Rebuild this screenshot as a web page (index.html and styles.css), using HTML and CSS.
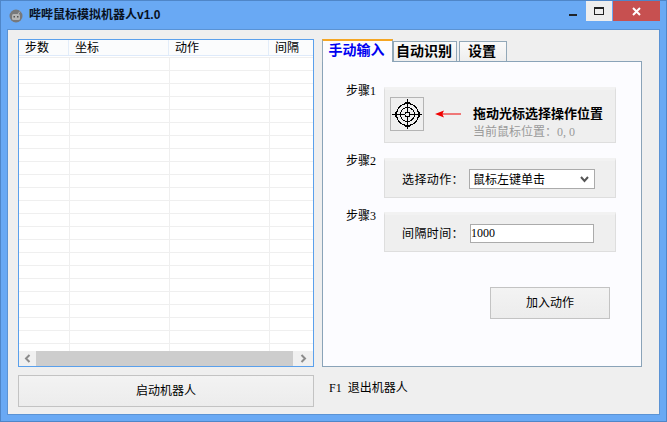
FILE: index.html
```html
<!DOCTYPE html>
<html lang="zh">
<head>
<meta charset="utf-8">
<title>哔哔鼠标模拟机器人v1.0</title>
<link rel="stylesheet" href="styles.css">
</head>
<body>
<div class="window">
  <header class="titlebar">
    <svg class="app-icon" width="14" height="14" viewBox="0 0 14 14">
      <circle cx="7" cy="7" r="6.5" fill="#77787a"/>
      <rect x="3" y="5" width="8" height="6" rx="1.5" fill="#b5b5b5"/>
      <rect x="4.5" y="7" width="1.5" height="1.5" fill="#555"/>
      <rect x="8" y="7" width="1.5" height="1.5" fill="#555"/>
      <path d="M9 5 L11 2.5" stroke="#b5b5b5" stroke-width="1"/>
    </svg>
    <div class="title">哔哔鼠标模拟机器人v1.0</div>
    <div class="controls">
      <div class="ctl ctl-min"><span class="min-bar"></span></div>
      <div class="ctl ctl-max"><span class="max-box"></span></div>
      <div class="ctl ctl-close">
        <svg width="9" height="9" viewBox="0 0 9 9"><path d="M1 1 L8 8 M8 1 L1 8" stroke="#fff" stroke-width="2"/></svg>
      </div>
    </div>
  </header>
  <main class="client">
    <section class="left">
      <div class="list">
        <div class="list-head">
          <div class="hcell hc1">步数</div>
          <div class="hcell hc2">坐标</div>
          <div class="hcell hc3">动作</div>
          <div class="hcell hc4">间隔</div>
        </div>
        <div class="rows">
          <div class="row"><i></i><i></i><i></i><i></i></div>
          <div class="row"><i></i><i></i><i></i><i></i></div>
          <div class="row"><i></i><i></i><i></i><i></i></div>
          <div class="row"><i></i><i></i><i></i><i></i></div>
          <div class="row"><i></i><i></i><i></i><i></i></div>
          <div class="row"><i></i><i></i><i></i><i></i></div>
          <div class="row"><i></i><i></i><i></i><i></i></div>
          <div class="row"><i></i><i></i><i></i><i></i></div>
          <div class="row"><i></i><i></i><i></i><i></i></div>
          <div class="row"><i></i><i></i><i></i><i></i></div>
          <div class="row"><i></i><i></i><i></i><i></i></div>
          <div class="row"><i></i><i></i><i></i><i></i></div>
          <div class="row"><i></i><i></i><i></i><i></i></div>
          <div class="row"><i></i><i></i><i></i><i></i></div>
          <div class="row"><i></i><i></i><i></i><i></i></div>
          <div class="row"><i></i><i></i><i></i><i></i></div>
          <div class="row"><i></i><i></i><i></i><i></i></div>
          <div class="row"><i></i><i></i><i></i><i></i></div>
          <div class="row"><i></i><i></i><i></i><i></i></div>
          <div class="row"><i></i><i></i><i></i><i></i></div>
          <div class="row"><i></i><i></i><i></i><i></i></div>
          <div class="row"><i></i><i></i><i></i><i></i></div>
          <div class="row row-last"><i></i><i></i><i></i><i></i></div>
        </div>
        <div class="hscroll">
          <div class="sb-arrow sb-left">
            <svg width="7" height="9" viewBox="0 0 7 9"><path d="M5.5 1 L2 4.5 L5.5 8" fill="none" stroke="#8c8c8c" stroke-width="2"/></svg>
          </div>
          <div class="sb-thumb"></div>
          <div class="sb-arrow sb-right">
            <svg width="7" height="9" viewBox="0 0 7 9"><path d="M1.5 1 L5 4.5 L1.5 8" fill="none" stroke="#8c8c8c" stroke-width="2"/></svg>
          </div>
        </div>
      </div>
      <button class="btn btn-start">启动机器人</button>
    </section>
    <section class="right">
      <div class="tabs">
        <div class="tab tab-active">手动输入</div>
        <div class="tab tab-auto">自动识别</div>
        <div class="tab tab-set">设置</div>
      </div>
      <div class="panel">
        <div class="step step-1">
          <div class="step-label">步骤1</div>
          <div class="group group-1">
            <div class="target">
              <svg width="30" height="30" viewBox="0 0 30 30" shape-rendering="crispEdges">
                <g fill="none" stroke="#000" stroke-width="1">
                  <circle cx="15.5" cy="15.5" r="11"/>
                  <circle cx="15.5" cy="15.5" r="7"/>
                  <circle cx="15.5" cy="15.5" r="2.5"/>
                </g>
                <path d="M15.5 0 V13 M15.5 18 V30 M0 15.5 H13 M18 15.5 H30" stroke="#000" stroke-width="1"/>
                <path d="M13 3.5 H18 M13 27.5 H18 M3.5 13 V18 M27.5 13 V18" stroke="#000" stroke-width="1"/>
              </svg>
            </div>
            <svg class="arrow" width="26" height="8" viewBox="0 0 26 8"><path d="M0 4 L9 0.5 L7.5 3.4 H26 V4.6 H7.5 L9 7.5 Z" fill="#f00000"/></svg>
            <div class="hint">
              <div class="hint-main">拖动光标选择操作位置</div>
              <div class="hint-sub">当前鼠标位置：0, 0</div>
            </div>
          </div>
        </div>
        <div class="step step-2">
          <div class="step-label">步骤2</div>
          <div class="group group-2">
            <span class="field-label">选择动作：</span>
            <div class="select">
              <span>鼠标左键单击</span>
              <svg width="9" height="7" viewBox="0 0 9 7"><path d="M1 1 L4.5 5 L8 1" fill="none" stroke="#555" stroke-width="2"/></svg>
            </div>
          </div>
        </div>
        <div class="step step-3">
          <div class="step-label">步骤3</div>
          <div class="group group-3">
            <span class="field-label">间隔时间：</span>
            <input class="input" type="text" value="1000">
          </div>
        </div>
        <div class="add-row"><button class="btn btn-add">加入动作</button></div>
      </div>
      <div class="hotkey">F1 退出机器人</div>
    </section>
  </main>
</div>
</body>
</html>
```
FILE: styles.css
```css
* { box-sizing: border-box; }
html, body { margin: 0; padding: 0; }
body {
  width: 667px;
  height: 422px;
  overflow: hidden;
  font-family: "Liberation Serif", "Noto Sans CJK SC", sans-serif;
  font-size: 12px;
  color: #000;
}
.window {
  width: 667px;
  height: 422px;
  display: flex;
  flex-direction: column;
  background: #69a9f4;
  border: 1px solid #4f86c8;
}
.titlebar {
  height: 28px;
  display: flex;
  align-items: flex-start;
  flex: none;
}
.app-icon { margin: 8px 0 0 8px; flex: none; }
.title {
  margin: 5px 0 0 6px;
  font: bold 12px/18px "Liberation Sans", "Noto Sans CJK SC", sans-serif;
  color: #08111e;
  flex: 1;
}
.controls { display: flex; margin-right: 6px; }
.ctl {
  height: 20px;
  display: flex;
  align-items: center;
  justify-content: center;
}
.ctl-min { width: 27px; }
.min-bar { width: 8px; height: 2px; background: #20252b; margin: 7px 0 0 0; display: block; }
.ctl-max { width: 26px; background: #eeeeee; margin-right: 1px; }
.max-box { display: block; width: 10px; height: 8px; border: 1px solid #222; border-top-width: 2px; }
.ctl-close { width: 47px; background: #c75050; }
.client {
  flex: 1;
  margin: 0 6px 6px 6px;
  background: #efefef;
  border: 1px solid #5b93d4;
  padding: 9px 0 0 10px;
  display: flex;
  align-items: flex-start;
}
.left { width: 296px; flex: none; display: flex; flex-direction: column; }
.list {
  height: 328px;
  background: #fff;
  border: 1px solid #5aa0ec;
  display: flex;
  flex-direction: column;
}
.list-head {
  height: 16px;
  display: flex;
  background: #fbfcfd;
  border-bottom: 1px solid #deeafa;
  flex: none;
}
.hcell { line-height: 17px; padding-left: 6px; border-right: 1px solid #e3edf9; }
.hc1 { width: 50px; }
.hc2 { width: 100px; }
.hc3 { width: 100px; }
.hc4 { width: 44px; border-right: 0; }
.rows { flex: 1; overflow: hidden; padding-top: 1px; }
.row {
  height: 13px;
  display: flex;
  border-top: 1px solid #efefef;
}
.row i { display: block; width: 100px; border-right: 1px solid #efefef; }
.row i:first-child { width: 51px; }
.row i:last-child { width: 43px; border-right: 0; }
.hscroll {
  height: 15px;
  flex: none;
  display: flex;
  background: #f0f0f0;
}
.sb-arrow { display: flex; align-items: center; justify-content: center; }
.sb-left { width: 17px; }
.sb-right { width: 20px; }
.sb-thumb { flex: 1; background: #cdcdcd; }
.btn {
  display: block;
  font: 12px/16px "Liberation Serif", "Noto Sans CJK SC", sans-serif;
  color: #000;
  padding: 0;
  border: 1px solid #c3c3c3;
  background: linear-gradient(#f3f3f3, #ececec);
}
.btn-start { height: 32px; margin-top: 8px; width: 296px; }
.right { width: 320px; margin-left: 8px; flex: none; }
.tabs { display: flex; height: 22px; align-items: flex-end; position: relative; z-index: 1; }
.tab {
  font: bold 14px/18px "Liberation Sans", "Noto Sans CJK SC", sans-serif;
  height: 20px;
  text-align: center;
  color: #000;
  padding-right: 2px;
  background: linear-gradient(#fafafa, #eeeeee);
  border: 1px solid #92a8b8;
  border-bottom: 0;
}
.tab-active {
  width: 71px;
  height: 23px;
  margin-bottom: -1px;
  color: #0000f0;
  background: #fcfcff;
  border-top: 2px solid #f5a623;
  border-color: #f5a623 #92a8b8 #fcfcff #92a8b8;
}
.tab-auto { width: 64px; }
.tab-set { width: 48px; margin-left: 2px; }
.panel {
  height: 306px;
  background: #fcfcff;
  border: 1px solid #8aa3b8;
  padding: 22px 0 0 23px;
}
.step { display: flex; align-items: flex-start; }
.step-label { width: 38px; flex: none; line-height: 12px; }
.group {
  width: 232px;
  background: #efefef;
  border: 1px solid #dedede;
  border-width: 0 1px 1px 1px;
  display: flex;
  align-items: center;
}
.step-1 .step-label { margin-top: 1px; }
.step-1 .group { margin-top: 3px; height: 56px; border-top: 3px solid #f2f2f2; }
.step-2 { margin-top: 11px; }
.step-2 .step-label { margin-top: 1px; }
.step-2 .group { margin-top: 4px; height: 40px; border-top: 3px solid #f2f2f2; padding-left: 17px; }
.step-3 { margin-top: 11px; }
.step-3 .step-label { margin-top: 1px; }
.step-3 .group { margin-top: 3px; height: 40px; border-top: 3px solid #f2f2f2; padding-left: 17px; }
.target {
  width: 34px;
  height: 34px;
  margin: 0 0 4px 5px;
  flex: none;
  border: 1px solid #b4b4b4;
  display: flex;
  align-items: center;
  justify-content: center;
}
.arrow { margin: 0 0 4px 11px; flex: none; }
.hint { margin-left: 12px; margin-top: 14px; }
.hint-main { font: bold 13px/18px "Liberation Sans", "Noto Sans CJK SC", sans-serif; white-space: nowrap; }
.hint-sub { color: #9a9a9a; line-height: 18px; white-space: nowrap; }
.field-label { width: 67px; flex: none; letter-spacing: 0.4px; }
.select {
  width: 126px;
  height: 20px;
  background: #fff;
  border: 1px solid #ababab;
  display: flex;
  align-items: center;
  justify-content: space-between;
  padding: 0 5px 0 3px;
}
.input {
  width: 124px;
  height: 19px;
  margin-left: 1px;
  background: #fff;
  border: 1px solid #ababab;
  padding: 0;
  font: 12px "Liberation Serif", serif;
  color: #000;
  outline: none;
}
.add-row { display: flex; justify-content: flex-end; padding: 35px 31px 0 0; }
.btn-add { width: 120px; height: 32px; }
.hotkey { margin: 13px 0 0 7px; line-height: 16px; word-spacing: 3px; }
```
